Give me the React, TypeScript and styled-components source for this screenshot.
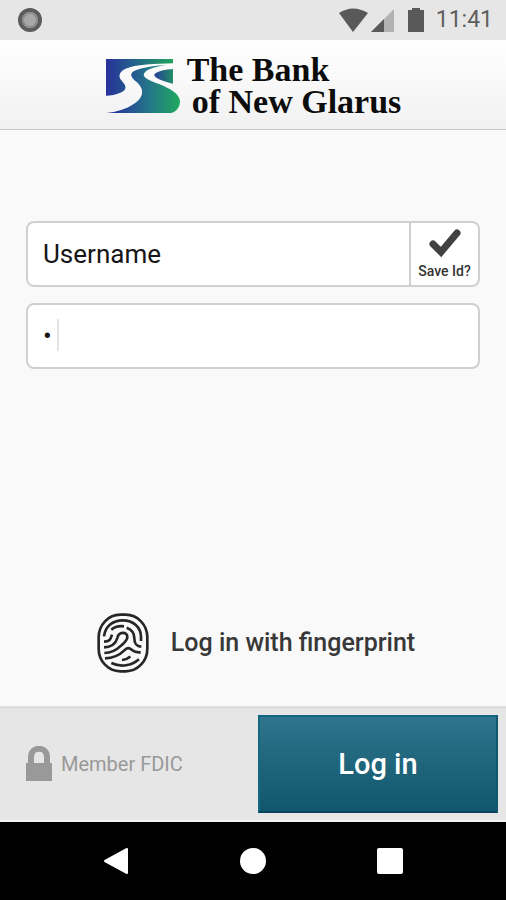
import React, { useState } from "react";
import styled, { createGlobalStyle } from "styled-components";

const GlobalStyle = createGlobalStyle`
  *, *::before, *::after { box-sizing: border-box; }
  body { margin: 0; background: #f9f9f9; font-family: Roboto, "Liberation Sans", sans-serif; }
  button, input { font: inherit; }
`;

const Screen = styled.div`
  display: flex;
  flex-direction: column;
  min-height: 100vh;
  background: #f9f9f9;
`;

const StatusBar = styled.div`
  display: flex;
  align-items: center;
  justify-content: space-between;
  height: 40px;
  padding: 0 13px 0 18px;
  background: #e6e6e6;
`;

const StatusIcons = styled.div`
  display: flex;
  align-items: center;
  color: #595959;
  svg { display: block; }
`;

const Clock = styled.span`
  margin-left: 12px;
  font-size: 23px;
  line-height: 28px;
  color: #5e5e5e;
`;

const Header = styled.header`
  display: flex;
  justify-content: center;
  gap: 7px;
  height: 90px;
  padding-top: 14px;
  border-bottom: 1px solid #c8c8c8;
  background: linear-gradient(#ffffff, #f1f1f1);
`;

const LogoMark = styled.svg`
  display: block;
  margin-top: 4px;
`;

const BankName = styled.h1`
  margin: 0;
  font: bold 34px/32px "Liberation Serif", serif;
  color: #0c0c0c;
  white-space: nowrap;
`;

const NameLine = styled.span<{ $indent?: boolean }>`
  display: block;
  padding-left: ${(p) => (p.$indent ? 5 : 0)}px;
`;

const LoginForm = styled.form`
  display: flex;
  flex: 1;
  flex-direction: column;
`;

const Fields = styled.div`
  display: flex;
  flex-direction: column;
  gap: 16px;
  padding: 91px 26px 0;
`;

const Field = styled.div`
  position: relative;
  display: flex;
  height: 66px;
  overflow: hidden;
  border: 2px solid #d0d0d0;
  border-radius: 8px;
  background: #ffffff;
`;

const TextInput = styled.input`
  flex: 1;
  min-width: 0;
  padding: 0 15px;
  border: 0;
  outline: 0;
  background: transparent;
  font-size: 26px;
  line-height: 32px;
  color: #161616;
  caret-color: transparent;
`;

const Caret = styled.span`
  position: absolute;
  top: 14px;
  left: 29px;
  width: 2px;
  height: 32px;
  background: #e4e4e4;
`;

const SaveToggle = styled.label`
  display: flex;
  flex-direction: column;
  align-items: center;
  width: 69px;
  padding-top: 6px;
  border-left: 2px solid #d0d0d0;
  font-size: 14px;
  font-weight: 500;
  line-height: 16px;
  color: #333333;
  white-space: nowrap;
  cursor: pointer;
`;

const SaveCheck = styled.span`
  display: grid;
  height: 34px;
  > * { grid-area: 1 / 1; }
`;

const SaveInput = styled.input`
  width: 34px;
  height: 30px;
  margin: 0;
  appearance: none;
  cursor: pointer;
  & + svg { visibility: hidden; pointer-events: none; }
  &:checked + svg { visibility: visible; }
`;

const FingerprintButton = styled.button`
  display: flex;
  align-items: center;
  align-self: center;
  gap: 22px;
  margin: auto 0 33px;
  padding: 0 0 0 6px;
  border: 0;
  background: none;
  font-size: 25px;
  font-weight: 500;
  line-height: 32px;
  color: #383838;
  cursor: pointer;
  svg { display: block; }
`;

const Footer = styled.footer`
  display: flex;
  align-items: center;
  height: 116px;
  padding: 0 8px 1px 25px;
  border-top: 3px solid #dedede;
  border-bottom: 2px solid #f2f2f2;
  background: #e6e6e6;
`;

const Member = styled.div`
  display: flex;
  flex: 1;
  align-items: center;
  gap: 8px;
  font-size: 20px;
  line-height: 28px;
  color: #999999;
  white-space: nowrap;
  svg { display: block; }
`;

const LoginButton = styled.button`
  flex: 0 1 240px;
  height: 98px;
  border: 2px solid;
  border-color: #106680 #10566c #08445b #126781;
  background: linear-gradient(#2e758d, #10566c);
  font-size: 29px;
  font-weight: 500;
  color: #ffffff;
  cursor: pointer;
`;

const NavBar = styled.nav`
  display: flex;
  align-items: center;
  justify-content: center;
  gap: 96px;
  height: 78px;
  background: #000000;
`;

const NavButton = styled.button`
  width: 41px;
  padding: 0;
  border: 0;
  background: none;
  cursor: pointer;
  svg { display: block; margin: 0 auto; }
`;

const RiverLogo = () => (
  <LogoMark width="75" height="56" viewBox="0 0 225 168" aria-hidden="true">
    <defs>
      <linearGradient id="bank" x1="0" x2="1">
        <stop offset="0" stopColor="#28309a" />
        <stop offset="0.45" stopColor="#24668a" />
        <stop offset="1" stopColor="#20a45c" />
      </linearGradient>
      <linearGradient id="river" gradientUnits="userSpaceOnUse" x1="20" y1="0" x2="220" y2="0">
        <stop offset="0" stopColor="#28309a" />
        <stop offset="0.55" stopColor="#24758a" />
        <stop offset="1" stopColor="#20a560" />
      </linearGradient>
      <linearGradient id="hill" x1="0" x2="1">
        <stop offset="0" stopColor="#283c98" />
        <stop offset="1" stopColor="#209066" />
      </linearGradient>
    </defs>
    <path fill="url(#bank)" d="M3 3H204V16C150 17 92 20 62 32C40 42 40 56 50 68C66 84 66 96 46 104C33 110 18 112 3 113Z" />
    <path fill="url(#river)" d="M204 19C165 22 108 27 86 40C74 48 78 58 90 68C124 94 114 120 86 138C64 153 34 162 4 165H198C215 163 225 146 225 130C224 108 197 92 162 78C130 66 112 58 117 47C125 31 162 23 204 19Z" />
    <path fill="url(#hill)" d="M204 33C182 34 158 39 149 48C143 57 164 67 204 77Z" />
  </LogoMark>
);

const Fingerprint = () => (
  <svg width="52" height="60" viewBox="33 36 156 180" fill="none" stroke="#262626" strokeWidth="8" aria-hidden="true">
    <rect x="38" y="41" width="146" height="170" rx="65" ry="68" />
    <path d="M54 106C58 76 80 58 110 58C142 58 165 79 165 108V120" />
    <path d="M76 86C86 77 98 74 114 76" />
    <path d="M122 80C139 86 145 98 145 112C145 128 149 136 166 137" />
    <path d="M54 122C73 122 74 113 78 101" />
    <path d="M54 139C77 138 90 126 94 111C98 91 124 91 124 108C124 119 114 126 105 134C92 147 77 156 55 156" />
    <path d="M57 172C84 171 102 161 115 148C122 140 129 139 137 146C145 153 154 155 164 154" />
    <path d="M108 177C119 176 126 173 133 166" />
    <path d="M76 186C105 200 137 194 159 175" />
  </svg>
);

export default function App() {
  const [username, setUsername] = useState("Username");
  const [password, setPassword] = useState("1");
  const [saveId, setSaveId] = useState(true);

  return (
    <Screen>
      <GlobalStyle />
      <StatusBar>
        <svg width="24" height="24" viewBox="0 0 24 24" aria-hidden="true">
          <circle cx="12" cy="12" r="10" fill="#a8a8a8" stroke="#5c5c5c" strokeWidth="4" />
          <circle cx="12" cy="12" r="7" fill="none" stroke="#8d8d8d" strokeWidth="2" />
        </svg>
        <StatusIcons>
          <svg width="69" height="26" viewBox="0 0 69 26" fill="currentColor" aria-hidden="true">
            <path d="M0 6Q14-3 29 6L14 25Z" />
            <path d="M32 25L55 2V25Z" fill="#b2b2b2" />
            <path d="M32 25L45 12V25Z" />
          </svg>
          <svg width="16" height="26" viewBox="0 0 16 26" fill="currentColor" aria-hidden="true">
            <path d="M4 1H12V3H16V25H0V3H4Z" />
          </svg>
          <Clock>11:41</Clock>
        </StatusIcons>
      </StatusBar>

      <Header>
        <RiverLogo />
        <BankName>
          <NameLine>The Bank</NameLine>
          <NameLine $indent>of New Glarus</NameLine>
        </BankName>
      </Header>

      <LoginForm onSubmit={(e: React.FormEvent) => e.preventDefault()}>
        <Fields>
          <Field>
            <TextInput
              type="text"
              aria-label="Username"
              value={username}
              onChange={(e) => setUsername(e.target.value)}
            />
            <SaveToggle>
              <SaveCheck>
                <SaveInput type="checkbox" checked={saveId} onChange={(e) => setSaveId(e.target.checked)} />
                <svg width="34" height="30" viewBox="0 0 34 30" fill="none" stroke="#414141" strokeWidth="7" aria-hidden="true">
                  <path d="M5 15L13 23L29 4" strokeLinecap="round" />
                </svg>
              </SaveCheck>
              Save Id?
            </SaveToggle>
          </Field>
          <Field>
            <TextInput
              type="password"
              aria-label="Password"
              value={password}
              onChange={(e) => setPassword(e.target.value)}
            />
            <Caret />
          </Field>
        </Fields>

        <FingerprintButton type="button">
          <Fingerprint />
          Log in with fingerprint
        </FingerprintButton>

        <Footer>
          <Member>
            <svg width="28" height="36" viewBox="0 0 28 36" aria-hidden="true">
              <path d="M6 18V11C6 0 22 0 22 11V18" fill="none" stroke="#999999" strokeWidth="6" />
              <path d="M1 17H27V35H1Z" fill="#999999" />
            </svg>
            Member FDIC
          </Member>
          <LoginButton type="submit">Log in</LoginButton>
        </Footer>
      </LoginForm>

      <NavBar>
        <NavButton type="button" aria-label="Back">
          <svg width="26" height="28" viewBox="0 0 26 28" aria-hidden="true">
            <path d="M2 14L24 2V26Z" fill="#fff" stroke="#fff" strokeWidth="2" strokeLinejoin="round" />
          </svg>
        </NavButton>
        <NavButton type="button" aria-label="Home">
          <svg width="28" height="28" viewBox="0 0 28 28" aria-hidden="true">
            <circle cx="14" cy="14" r="13" fill="#fff" />
          </svg>
        </NavButton>
        <NavButton type="button" aria-label="Recent apps">
          <svg width="28" height="28" viewBox="0 0 28 28" aria-hidden="true">
            <rect x="1" y="1" width="26" height="26" rx="2" fill="#fff" />
          </svg>
        </NavButton>
      </NavBar>
    </Screen>
  );
}
